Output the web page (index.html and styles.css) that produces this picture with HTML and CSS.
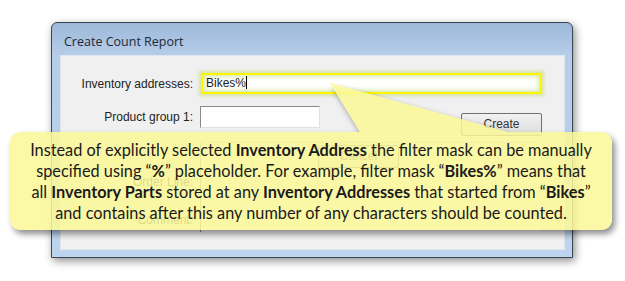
FILE: index.html
```html
<!DOCTYPE html>
<html>
<head>
	<title>Create Count Report</title>
	<link rel="stylesheet" href="styles.css">
</head>
<body>
	<section class="stage">
	<div class="window">
		<div class="titlebar">Create Count Report</div>
		<div class="client">
			<div class="row row-first">
				<span class="label">Inventory addresses:</span>
				<div class="field field-active">Bikes%<span class="caret"></span></div>
			</div>
			<div class="row row-second">
				<span class="label">Product group 1:</span>
				<div class="field field-short"></div>
				<span class="button button-create">Create</span>
			</div>
			<div class="row row-third">
				<span class="label">Order Line:</span>
				<div class="field field-tall"></div>
				<span class="button button-cancel">Cancel</span>
			</div>
			<div class="row row-fourth">
				<span class="label">Comment:</span>
				<div class="field field-tall"></div>
			</div>
		</div>
	</div>
	</section>

	<!-- выноска с подсказкой поверх окна -->
	<svg class="callout-shape" width="625" height="281" viewBox="0 0 625 281">
		<defs>
			<filter id="soft" x="-10%" y="-10%" width="120%" height="140%">
				<feGaussianBlur stdDeviation="3"/>
			</filter>
			<mask id="outside">
				<rect width="625" height="281" fill="#fff"/>
				<path d="M22 132 H360 L330 83 L508 132 H600 Q612 132 612 144 V218 Q612 230 600 230 H22 Q10 230 10 218 V144 Q10 132 22 132 Z" fill="#000"/>
			</mask>
		</defs>
		<g mask="url(#outside)">
			<path d="M22 132 H360 L330 83 L508 132 H600 Q612 132 612 144 V218 Q612 230 600 230 H22 Q10 230 10 218 V144 Q10 132 22 132 Z" transform="translate(3 4)" fill="#000" opacity=".45" filter="url(#soft)"/>
		</g>
		<path d="M22 132 H360 L330 83 L508 132 H600 Q612 132 612 144 V218 Q612 230 600 230 H22 Q10 230 10 218 V144 Q10 132 22 132 Z" fill="#fcf897" fill-opacity=".86"/>
	</svg>
	<div class="callout-text">
		<p>Instead of explicitly selected <b>Inventory Address</b> the filter mask can be manually</p>
		<p>specified using &ldquo;<b>%</b>&rdquo; placeholder. For example, filter mask &ldquo;<b>Bikes%</b>&rdquo; means that</p>
		<p>all <b>Inventory Parts</b> stored at any <b>Inventory Addresses</b> that started from &ldquo;<b>Bikes</b>&rdquo;</p>
		<p>and contains after this any number of any characters should be counted.</p>
	</div>
</body>
</html>
```

FILE: styles.css
```css
	body {
		margin: 0;
		background: #fff;
		width: 625px;
		height: 281px;
		overflow: hidden;
		position: relative;
		font-family: "Liberation Sans", Arial, sans-serif;
	}
	.stage {
		padding: 22px 0 0 51px;
	}
	.window {
		width: 520px;
		height: 234px;
		border: 1px solid #3c4650;
		border-radius: 6px 6px 0 0;
		background: linear-gradient(#9db8d8, #b6cde9 32px, #bcd4ee);
		box-shadow: 2px 3px 8px rgba(0,0,0,0.45);
		display: flex;
		flex-direction: column;
	}
	.titlebar {
		height: 32px;
		line-height: 38px;
		padding-left: 12px;
		font-family: "Open Sans", "Noto Sans", sans-serif;
		font-size: 12.5px;
		color: #1e2a36;
	}
	.client {
		flex: 1;
		margin: 0 7px 7px 8px;
		background: #f0f0f0;
		border: 1px solid #dfe6ee;
		padding-top: 17px;
		font-size: 12px;
		color: #222;
		overflow: hidden;
	}
	.row {
		display: flex;
		align-items: center;
		gap: 7px;
	}
	.label {
		width: 132px;
		text-align: right;
	}
	.field {
		background: #fff;
		border: 1px solid #8a8a8a;
		border-right-color: #e0e0e0;
		border-bottom-color: #e0e0e0;
		box-sizing: border-box;
	}
	.field-active {
		width: 341px;
		height: 21px;
		margin-left: 1px;
		border: 2px solid #fff500;
		box-shadow: 0 0 3px 2px rgba(190,220,110,0.55), inset 0 0 4px 2px rgba(200,225,140,0.7);
		padding-left: 3px;
		line-height: 17px;
		font-size: 12px;
		color: #1c1c1c;
	}
	.caret {
		display: inline-block;
		width: 1px;
		height: 13px;
		background: #000;
		vertical-align: -2px;
	}
	.row-second {
		margin-top: 12px;
		align-items: flex-start;
	}
	.field-short {
		width: 120px;
		height: 22px;
	}
	.row-second .label {
		line-height: 22px;
	}
	.button {
		margin-left: 134px;
		margin-top: 7px;
		width: 81px;
		height: 23px;
		box-sizing: border-box;
		border: 1px solid #707070;
		border-radius: 2px;
		background: linear-gradient(#f2f2f2, #dcdcdc);
		text-align: center;
		line-height: 21px;
		color: #333;
	}
	.row-third {
		margin-top: 6px;
		align-items: flex-start;
	}
	.row-third .label {
		line-height: 22px;
		margin-top: 29px;
	}
	.field-tall {
		width: 340px;
		height: 52px;
		border-bottom: none;
		border-right: none;
		border-top-color: #c8c8c8;
		background: #f8f8f8;
	}
	.button-cancel {
		margin-left: -229px;
		margin-top: 3px;
	}
	.row-fourth {
		align-items: flex-start;
	}
	.row-fourth .label {
		margin-top: 19px;
	}
	.row-fourth .field-tall {
		height: 38px;
		border-top: none;
	}
	.callout-shape {
		position: absolute;
		left: 0;
		top: 0;
	}
	.callout-text {
		position: absolute;
		left: 10px;
		top: 139px;
		width: 602px;
		text-align: center;
		font-family: Lato, "Open Sans", sans-serif;
		font-size: 16.3px;
		color: #1a1a1a;
	}
	.callout-text p {
		margin: 0;
		line-height: 21px;
		white-space: nowrap;
	}
```
